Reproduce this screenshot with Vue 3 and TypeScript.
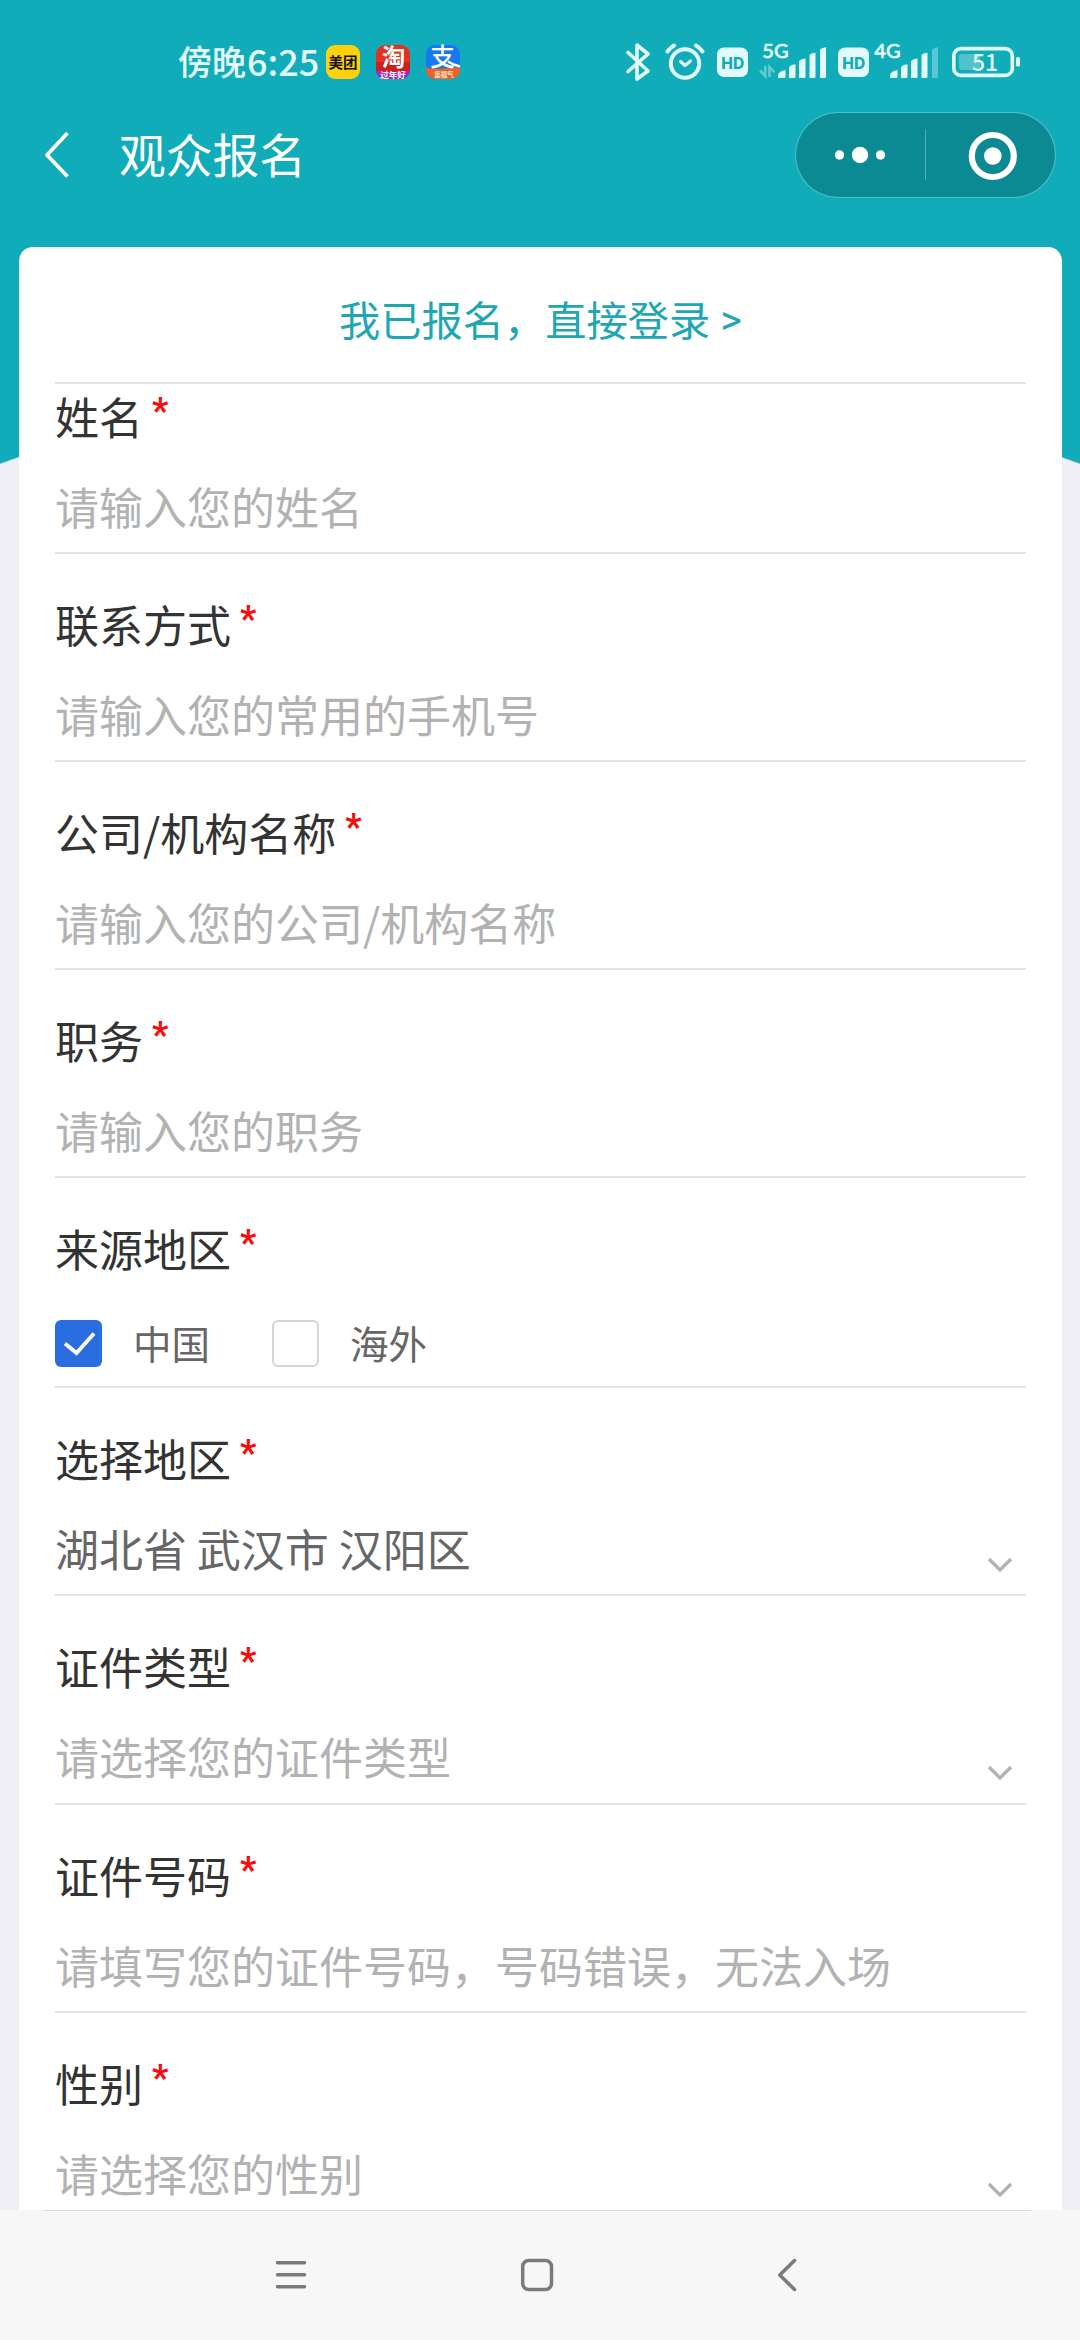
<script setup lang="ts">
interface Field {
  label: string
  kind: 'input' | 'select' | 'radio'
  value?: string
  placeholder?: string
  tall?: boolean
}

const fields: Field[] = [
  { label: '姓名', kind: 'input', placeholder: '请输入您的姓名' },
  { label: '联系方式', kind: 'input', placeholder: '请输入您的常用的手机号' },
  { label: '公司/机构名称', kind: 'input', placeholder: '请输入您的公司/机构名称' },
  { label: '职务', kind: 'input', placeholder: '请输入您的职务' },
  { label: '来源地区', kind: 'radio' },
  { label: '选择地区', kind: 'select', value: '湖北省 武汉市 汉阳区' },
  { label: '证件类型', kind: 'select', placeholder: '请选择您的证件类型', tall: true },
  { label: '证件号码', kind: 'input', placeholder: '请填写您的证件号码，号码错误，无法入场' },
  { label: '性别', kind: 'select', placeholder: '请选择您的性别' },
]

const regions = [
  { name: '中国', checked: true },
  { name: '海外', checked: false },
]
</script>

<template>
  <div class="screen">
    <svg class="backdrop" width="1080" height="480" viewBox="0 0 1080 480">
      <path d="M0 0H1080V463.7L1061 457Q800 380 540 380T19 457L0 463.7Z" fill="#10acba" />
    </svg>

    <header class="status">
      <div class="clock"><span class="cjk">傍晚</span><span class="digits">6:25</span></div>
      <div class="apps">
        <svg width="34" height="34" viewBox="0 0 34 34">
          <rect width="34" height="34" rx="9" fill="#ffd10a" />
          <text x="17" y="22.5" text-anchor="middle" font-size="14.5" font-weight="700" fill="#111">美团</text>
        </svg>
        <svg width="34" height="34" viewBox="0 0 34 34">
          <defs>
            <clipPath id="round"><rect width="34" height="34" rx="9" /></clipPath>
          </defs>
          <g clip-path="url(#round)">
            <rect width="34" height="34" fill="#e4301c" />
            <path d="M0 17L34 17V28H0Z" fill="#c9201c" />
            <path d="M0 25Q17 29 34 25V34H0Z" fill="#b020c4" />
          </g>
          <text x="17.5" y="20.5" text-anchor="middle" font-size="23.5" font-weight="700" fill="#fff">淘</text>
          <text x="17" y="32.5" text-anchor="middle" font-size="8.5" font-weight="700" fill="#fff">过年好</text>
        </svg>
        <svg width="34" height="34" viewBox="0 0 34 34">
          <g clip-path="url(#round)">
            <rect width="34" height="34" fill="#1878f2" />
            <path d="M0 23Q17 25 34 22V34H0Z" fill="#f2602a" />
            <path d="M22 16.500Q27 20 34 21.500" fill="none" stroke="#fff" stroke-width="2.200" />
          </g>
          <text x="16.500" y="20.500" text-anchor="middle" font-size="24.500" font-weight="500" fill="#fff">支</text>
          <text x="18" y="31.500" text-anchor="middle" font-size="6.500" font-weight="700" fill="#ffe9c0">集福气</text>
        </svg>
      </div>

      <div class="system">
        <svg width="28" height="65" viewBox="624 30 28 65" fill="none" stroke="#e3fafb" stroke-width="3.6" stroke-linecap="round" stroke-linejoin="round">
          <path d="M628 52.5L648 71L637 79V45L648 54L628 71.5" />
        </svg>
        <svg width="40" height="65" viewBox="664.5 30 40 65" fill="none" stroke="#e3fafb" stroke-linecap="round">
          <circle cx="684.5" cy="63.5" r="14.2" stroke-width="4" />
          <path d="M667 51.5Q670 47.5 673.5 45.5M702 51.5Q699 47.5 695.5 45.5" stroke-width="4" />
          <path d="M680 61.5L684.5 65.5L690 61" stroke-width="3.2" stroke-linejoin="round" />
        </svg>
        <svg width="31" height="65" viewBox="716.5 30 31 65">
          <rect x="716.5" y="47.5" width="31" height="29.5" rx="7" fill="#e3fafb" />
          <text x="732.2" y="68.5" text-anchor="middle" class="hd">HD</text>
        </svg>
        <svg width="68" height="65" viewBox="759 30 68 65">
          <text x="762.3" y="57.8" class="gen">5G</text>
          <path d="M765.2 66V76L760 70.5M769.5 77V67L774.5 72.5" fill="none" stroke="#e3fafb" stroke-width="2.6" opacity=".4" />
          <g fill="#e3fafb">
            <path d="M778 77.5V75Q779 71 785.5 70V76.5Q785.5 78 784 78H779Q778 78 778 77.5Z" />
            <path d="M789 78V67Q791 64.5 795.5 64.3V76.5Q795.5 78 794 78Z" />
            <path d="M799 78V61Q801 58.7 805.5 58.5V76.5Q805.5 78 804 78Z" />
            <path d="M809.500 78V55Q811 53 815.500 52.700V76.500Q815.500 78 814 78Z" />
            <path d="M820 78V49.500Q822 47.500 826 47.200V76.500Q826 78 824.500 78Z" />
          </g>
        </svg>
        <svg width="31" height="65" viewBox="837.5 30 31 65">
          <rect x="837.5" y="47.5" width="31" height="29.5" rx="7" fill="#e3fafb" />
          <text x="853.2" y="68.5" text-anchor="middle" class="hd">HD</text>
        </svg>
        <svg width="65" height="65" viewBox="874 30 65 65">
          <text x="874.3" y="57.8" class="gen">4G</text>
          <g fill="#e3fafb">
            <path d="M890 77.5V75Q891 71 897.500 70V76.500Q897.500 78 896 78H891Q890 78 890 77.500Z" />
            <path d="M901 78V67Q903 64.500 907.500 64.300V76.500Q907.500 78 906 78Z" />
            <path d="M911 78V61Q913 58.700 917.500 58.500V76.500Q917.500 78 916 78Z" />
            <path d="M921.500 78V55Q923 53 927.500 52.700V76.500Q927.500 78 926 78Z" />
            <path opacity=".35" d="M932 78V49.500Q934 47.500 938 47.200V76.500Q938 78 936.500 78Z" />
          </g>
        </svg>
        <svg width="69" height="65" viewBox="952 30 69 65">
          <rect x="953.8" y="48.600" width="58.500" height="26.800" rx="7" fill="none" stroke="#e3fafb" stroke-width="3.600" />
          <path d="M962 54H980V70H962Q959 70 959 67V57Q959 54 962 54Z" fill="#e3fafb" opacity=".3" />
          <rect x="1016" y="57" width="4" height="9.500" rx="1.500" fill="#e3fafb" />
          <text x="985" y="70.800" text-anchor="middle" class="level">51</text>
        </svg>
      </div>
    </header>

    <nav class="titlebar">
      <svg class="back" width="26" height="50" viewBox="0 0 26 50" fill="none" stroke="#fff" stroke-width="3.800" stroke-linejoin="round">
        <path d="M23.500 3L3 25L23.500 46.500" />
      </svg>
      <h1>观众报名</h1>
      <div class="capsule">
        <svg width="259" height="84" viewBox="796 113 259 84">
          <g fill="#fff">
            <circle cx="839.500" cy="155" r="4.700" />
            <circle cx="860" cy="155" r="8.200" />
            <circle cx="880.500" cy="155" r="4.700" />
            <circle cx="992.800" cy="156" r="8.800" />
          </g>
          <path d="M925.500 129V180" stroke="#fff" stroke-opacity=".3" />
          <circle cx="992.800" cy="156" r="21" fill="none" stroke="#fff" stroke-width="6.200" />
        </svg>
      </div>
    </nav>

    <main class="card">
      <div class="login">我已报名，直接登录<span class="gt">&gt;</span></div>
      <section v-for="f in fields" :key="f.label" class="field" :class="[f.kind, { tall: f.tall }]">
        <div class="label">{{ f.label }}<span class="star">*</span></div>
        <div v-if="f.kind === 'radio'" class="options">
          <div v-for="r in regions" :key="r.name" class="option">
            <span class="box" :class="{ on: r.checked }">
              <svg v-if="r.checked" width="47" height="47" viewBox="0 0 47 47" fill="none" stroke="#fff" stroke-width="3.800">
                <path d="M10 23.500L21.500 33L39 13.500" />
              </svg>
            </span>
            <span class="name">{{ r.name }}</span>
          </div>
        </div>
        <div v-else class="control">
          <span :class="f.value ? 'value' : 'placeholder'">{{ f.value ?? f.placeholder }}</span>
          <svg v-if="f.kind === 'select'" class="chevron" width="26" height="16" viewBox="0 0 26 16" fill="none" stroke="#b2b2b2" stroke-width="3.200">
            <path d="M2 2L13 13L24 2" />
          </svg>
        </div>
      </section>
    </main>

    <footer class="navbar">
      <svg width="1080" height="130" viewBox="0 2210 1080 130" fill="none" stroke="#7a7a7a" stroke-width="3.500" stroke-linecap="round" stroke-linejoin="round">
        <path d="M43 2210.500H1031" stroke="#dcdcdc" stroke-width="1" stroke-linecap="butt" />
        <path d="M277.500 2262.700H304.500M277.500 2274.800H304.500M277.500 2286.800H304.500" />
        <rect x="522.700" y="2260.500" width="28.800" height="29" rx="6" />
        <path d="M794.500 2260.500L779.800 2275L794.500 2289.500" />
      </svg>
    </footer>
  </div>
</template>

<style>
body {
  margin: 0;
  overflow: hidden;
}
</style>

<style scoped>
.screen {
  position: relative;
  display: flex;
  flex-direction: column;
  width: 1080px;
  height: 2340px;
  overflow: hidden;
  background: #efeef4;
  font-family: 'Noto Sans CJK SC', sans-serif;
}
svg {
  display: block;
  flex: none;
}
.backdrop {
  position: absolute;
  top: 0;
  left: 0;
}
.status {
  position: relative;
  display: flex;
  flex: none;
  height: 65px;
  margin-top: 30px;
  color: #e3fafb;
}
.clock {
  display: flex;
  width: 148px;
  margin-left: 178px;
  line-height: 62px;
  white-space: nowrap;
  font-weight: 500;
}
.cjk {
  font-size: 34px;
}
.digits {
  font-size: 36px;
  margin-left: 1px;
  line-height: 60px;
}
.apps {
  display: flex;
  gap: 16px;
  padding-top: 15px;
}
.apps svg {
  overflow: visible;
}
.system {
  display: flex;
  margin-left: 164px;
}
.system svg:nth-child(2) { margin-left: 12.5px; }
.system svg:nth-child(3) { margin-left: 12px; }
.system svg:nth-child(4) { margin-left: 11.5px; }
.system svg:nth-child(5) { margin-left: 10.5px; }
.system svg:nth-child(6) { margin-left: 5.5px; }
.system svg:nth-child(7) { margin-left: 13px; }
.hd {
  font: 800 15.5px Inter, sans-serif;
  fill: #10acba;
}
.gen {
  font: 500 20px Lato, sans-serif;
  fill: #e3fafb;
  stroke: #e3fafb;
  stroke-width: 0.6px;
}
.level {
  font: 500 23px 'Noto Sans CJK SC', sans-serif;
  fill: #e3fafb;
}
.titlebar {
  position: relative;
  display: flex;
  flex: none;
  height: 120px;
  padding: 0 24px 0 44px;
  margin-bottom: 32px;
  align-items: center;
}
h1 {
  flex: 1;
  margin: 0 0 4px 49px;
  font-size: 46.75px;
  line-height: 60px;
  font-weight: 400;
  color: #fff;
}
.capsule {
  border: 1px solid rgba(255, 255, 255, 0.25);
  border-radius: 43px;
  background: #0b8a93;
  background-clip: padding-box;
}
.card {
  position: relative;
  flex: 1;
  min-height: 0;
  overflow: hidden;
  width: 971px;
  margin-left: 19px;
  padding: 0 36px;
  border-radius: 14px 14px 0 0;
  background: #fff;
}
.login {
  display: flex;
  height: 129px;
  padding-top: 6px;
  border-bottom: 2px solid #e3e3e3;
  align-items: center;
  justify-content: center;
  font-size: 41.25px;
  color: #1ea7b3;
}
.gt {
  margin: 4px 0 0 10px;
  font-family: Roboto, sans-serif;
}
.field {
  padding: 38px 0 14px;
  border-bottom: 2px solid #e3e3e3;
  font-size: 44px;
  line-height: 64px;
}
.login + .field {
  padding-top: 0;
}
.field.tall {
  padding-bottom: 15px;
}
.field.radio {
  padding-bottom: 19px;
}
.label {
  display: flex;
  height: 64px;
  color: #333;
}
.star {
  margin-left: 9px;
  font-family: Roboto, sans-serif;
  font-size: 36px;
  font-weight: 700;
  line-height: 54px;
  color: #f80b0b;
}
.control {
  display: flex;
  height: 64px;
  margin-top: 26px;
  justify-content: space-between;
}
.placeholder {
  color: #b2b2b2;
}
.value {
  color: #666;
}
.chevron {
  margin: 41px 13px 0 0;
}
.options {
  display: flex;
  gap: 62px;
  margin-top: 40px;
  font-size: 38.5px;
  line-height: 47px;
  color: #666;
}
.option {
  display: flex;
  gap: 31px;
}
.name {
  line-height: 44px;
}
.box {
  box-sizing: border-box;
  width: 47px;
  height: 47px;
  border: 2px solid #d4d4d4;
  border-radius: 6px;
}
.box.on {
  border: 0;
  background: #2a6de0;
}
.navbar {
  position: relative;
  flex: none;
  height: 130px;
  background: #f7f7f7;
}
</style>
